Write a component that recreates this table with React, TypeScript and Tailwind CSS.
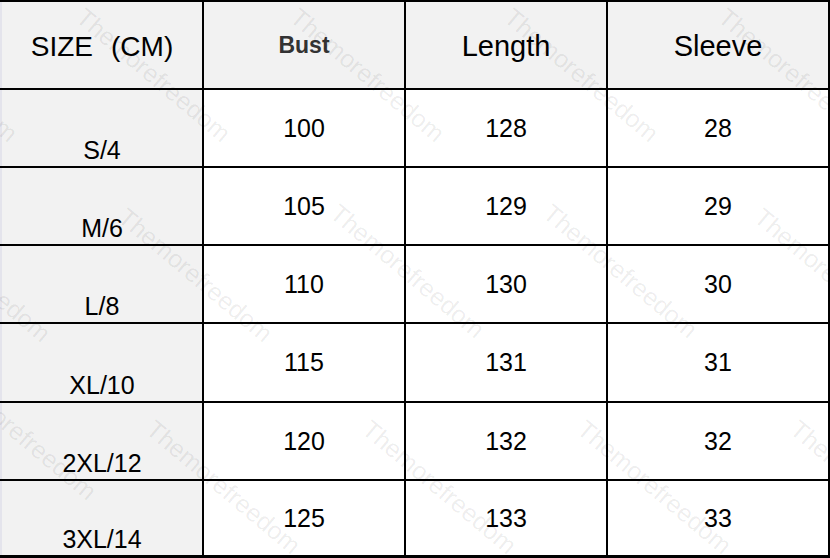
const sizes = [
  { size: 'S/4', bust: 100, length: 128, sleeve: 28 },
  { size: 'M/6', bust: 105, length: 129, sleeve: 29 },
  { size: 'L/8', bust: 110, length: 130, sleeve: 30 },
  { size: 'XL/10', bust: 115, length: 131, sleeve: 31 },
  { size: '2XL/12', bust: 120, length: 132, sleeve: 32 },
  { size: '3XL/14', bust: 125, length: 133, sleeve: 33 },
];

// watermark start points (top-left of the "T")
const marks = [
  'left-[-125px] top-[4px]',
  'left-[88px] top-[4px]',
  'left-[302px] top-[4px]',
  'left-[516px] top-[4px]',
  'left-[730px] top-[4px]',
  'left-[-92px] top-[204px]',
  'left-[130px] top-[204px]',
  'left-[342px] top-[200px]',
  'left-[555px] top-[200px]',
  'left-[766px] top-[204px]',
  'left-[-46px] top-[362px]',
  'left-[158px] top-[416px]',
  'left-[374px] top-[416px]',
  'left-[589px] top-[416px]',
  'left-[802px] top-[416px]',
];

export default function App() {
  return (
    <div className="relative w-[830px] h-[558px] overflow-hidden bg-black font-['Liberation_Sans',Arial,sans-serif] text-black">
      <div className="grid grid-cols-[202px_200px_200px_220px] grid-rows-[86px_76px_76px_76px_77px_76px_74px] gap-[2px] pt-[2px] pr-[2px] pb-[3px]">
        {/* Header */}
        <div className="flex items-center justify-center pt-[3px] bg-[#f2f2f2] border-l-2 border-[#e4e4ec] text-[28px] leading-none whitespace-nowrap">
          SIZE<span className="ml-[18px]">(CM)</span>
        </div>
        <div className="flex items-center justify-center bg-[#f2f2f2] text-[23px] font-bold leading-none text-[#333]">
          Bust
        </div>
        <div className="flex items-center justify-center pt-[3px] bg-[#f2f2f2] text-[29px] leading-none">
          Length
        </div>
        <div className="flex items-center justify-center pt-[3px] bg-[#f2f2f2] text-[29px] leading-none">
          Sleeve
        </div>

        {sizes.map((r) => (
          <div key={r.size} className="contents">
            <div className="flex items-end justify-center pb-[3px] bg-[#f2f2f2] border-l-2 border-[#e4e4ec] text-[25px] leading-none">
              {r.size}
            </div>
            <div className="flex items-center justify-center bg-white text-[25px] leading-none">{r.bust}</div>
            <div className="flex items-center justify-center bg-white text-[25px] leading-none">{r.length}</div>
            <div className="flex items-center justify-center bg-white text-[25px] leading-none">{r.sleeve}</div>
          </div>
        ))}
      </div>

      {/* Watermark */}
      <div className="absolute inset-0 pointer-events-none">
        {marks.map((m, i) => (
          <span
            key={i}
            className={`absolute ${m} origin-top-left rotate-[40deg] text-[25px] leading-none whitespace-nowrap text-black/[0.08]`}
          >
            Themorefreedom
          </span>
        ))}
      </div>
    </div>
  );
}
